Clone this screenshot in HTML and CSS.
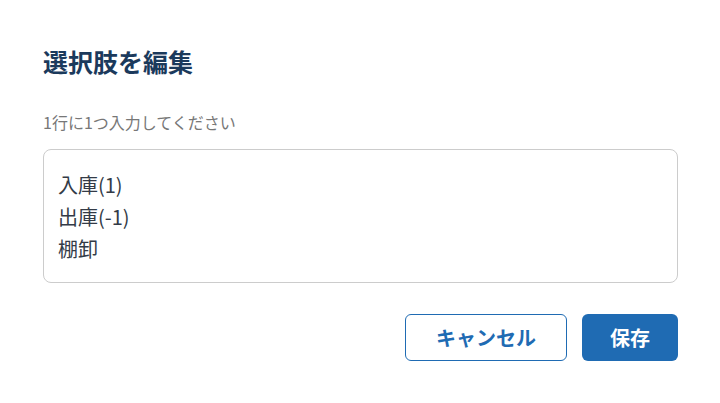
FILE: index.html
```html
<!DOCTYPE html>
<html lang="ja">
<head>
<meta charset="utf-8">
<link rel="stylesheet" href="styles.css">
</head>
<body>
<div class="dialog">
  <h2 class="title">選択肢を編集</h2>
  <p class="hint">1行に1つ入力してください</p>
  <div class="textarea">
    <div>入庫(1)</div>
    <div>出庫(-1)</div>
    <div>棚卸</div>
  </div>
  <div class="actions">
    <button class="btn btn-outline">キャンセル</button>
    <button class="btn btn-primary">保存</button>
  </div>
</div>
</body>
</html>
```
FILE: styles.css
```css
html, body {
  margin: 0;
  padding: 0;
  background: #ffffff;
}
body {
  font-family: "Noto Sans CJK JP", "Noto Sans", sans-serif;
}
.dialog {
  width: 720px;
  height: 403px;
  box-sizing: border-box;
  padding: 46px 42px 0 43px;
  display: flex;
  flex-direction: column;
}
.title {
  margin: 0;
  font-size: 25px;
  line-height: 30px;
  font-weight: 700;
  color: #1b3a5c;
}
.hint {
  margin: 34px 0 0;
  font-size: 16px;
  line-height: 24px;
  color: #777777;
}
.textarea {
  margin-top: 15px;
  height: 134px;
  box-sizing: border-box;
  border: 1px solid #cccccc;
  border-radius: 8px;
  padding: 19px 14px 0;
  font-size: 20px;
  line-height: 32px;
  color: #333b47;
}
.actions {
  margin-top: 31px;
  display: flex;
  justify-content: flex-end;
  gap: 15px;
}
.btn {
  font-family: "Noto Sans CJK JP", "Noto Sans", sans-serif;
  font-size: 20px;
  font-weight: 700;
  height: 47px;
  border-radius: 6px;
  box-sizing: border-box;
  cursor: pointer;
}
.btn-outline {
  width: 162px;
  background: #ffffff;
  color: #1f6bb3;
  border: 1.5px solid #1f6bb3;
}
.btn-primary {
  width: 96px;
  background: #1f6bb3;
  color: #ffffff;
  border: none;
}
```
